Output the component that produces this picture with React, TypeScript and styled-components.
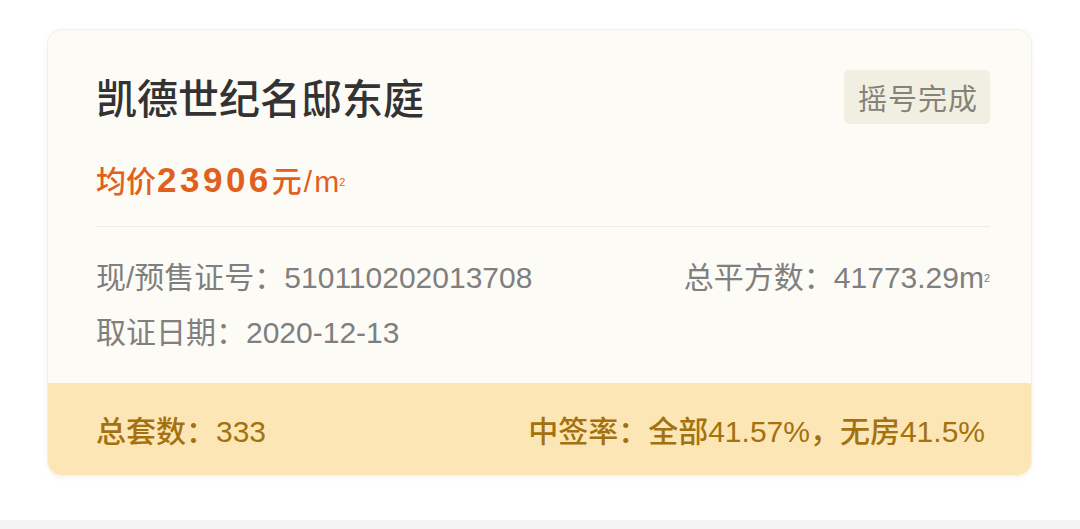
import React from "react";
import styled, { createGlobalStyle } from "styled-components";

const Global = createGlobalStyle`
  body {
    margin: 0;
    background: #ffffff;
    font-family: "Liberation Sans", "Noto Sans CJK SC", sans-serif;
  }
`;

const Page = styled.div`
  width: 1080px;
  height: 529px;
  display: flex;
  flex-direction: column;
  overflow: hidden;
`;

const Stage = styled.div`
  padding: 30px 49px 0 48px;
`;

const Card = styled.div`
  background: #fdfbf5;
  border-radius: 14px;
  box-shadow: 0 0 0 1px #f5f0e4, 0 2px 6px rgba(200, 180, 140, 0.18);
  overflow: hidden;
  display: flex;
  flex-direction: column;
`;

const Body = styled.div`
  padding: 40px 41px 30px 48px;
  display: flex;
  flex-direction: column;
`;

const Header = styled.div`
  height: 54px;
  display: flex;
  align-items: center;
  justify-content: space-between;
`;

const Title = styled.div`
  font-size: 41px;
  font-weight: 500;
  color: #333333;
  line-height: 54px;
  padding-top: 5px;
`;

const Badge = styled.div`
  height: 54px;
  padding: 0 12px 0 14px;
  display: flex;
  align-items: center;
  background: #f1efe1;
  border-radius: 5px;
  font-size: 29px;
  color: #858379;
  letter-spacing: 1px;
`;

const Price = styled.div`
  margin-top: 36px;
  height: 40px;
  line-height: 40px;
  font-size: 30px;
  font-weight: 500;
  color: #e1601d;
  white-space: nowrap;
`;

const Num = styled.span`
  font-size: 35px;
  font-weight: 700;
  letter-spacing: 3.5px;
  margin: 0 0 0 1px;
`;

const Unit = styled.span`
  margin-left: 2px;
`;

const Sup = styled.sup`
  font-size: 0.36em;
  position: relative;
  top: -0.6em;
  vertical-align: baseline;
  line-height: 0;
`;

const Divider = styled.div`
  margin-top: 26px;
  height: 1px;
  background: #efebde;
`;

const InfoRow = styled.div<{ $first?: boolean }>`
  margin-top: ${(p) => (p.$first ? "31px" : "15px")};
  height: 40px;
  line-height: 40px;
  display: flex;
  justify-content: space-between;
  font-size: 30px;
  color: #7f7f7f;
  white-space: nowrap;
`;

const Footer = styled.div`
  height: 92px;
  background: #fde6b5;
  padding: 0 46px 0 48px;
  display: flex;
  align-items: center;
  justify-content: space-between;
  font-size: 30px;
  font-weight: 500;
  color: #a3720f;
  white-space: nowrap;
`;

const Bottom = styled.div`
  flex: 1;
  background: #f4f4f4;
  margin-top: 45px;
`;

const SqM = () => (
  <span>
    m<Sup>2</Sup>
  </span>
);

export default function App() {
  return (
    <Page>
      <Global />
      <Stage>
        <Card>
          <Body>
            <Header>
              <Title>凯德世纪名邸东庭</Title>
              <Badge>摇号完成</Badge>
            </Header>
            <Price>
              均价<Num>23906</Num>元<Unit>/</Unit>
              <Unit>
                <SqM />
              </Unit>
            </Price>
            <Divider />
            <InfoRow $first>
              <span>现/预售证号：510110202013708</span>
              <span>
                总平方数：41773.29
                <SqM />
              </span>
            </InfoRow>
            <InfoRow>
              <span>取证日期：2020-12-13</span>
            </InfoRow>
          </Body>
          <Footer>
            <span>总套数：333</span>
            <span>中签率：全部41.57%，无房41.5%</span>
          </Footer>
        </Card>
      </Stage>
      <Bottom />
    </Page>
  );
}
